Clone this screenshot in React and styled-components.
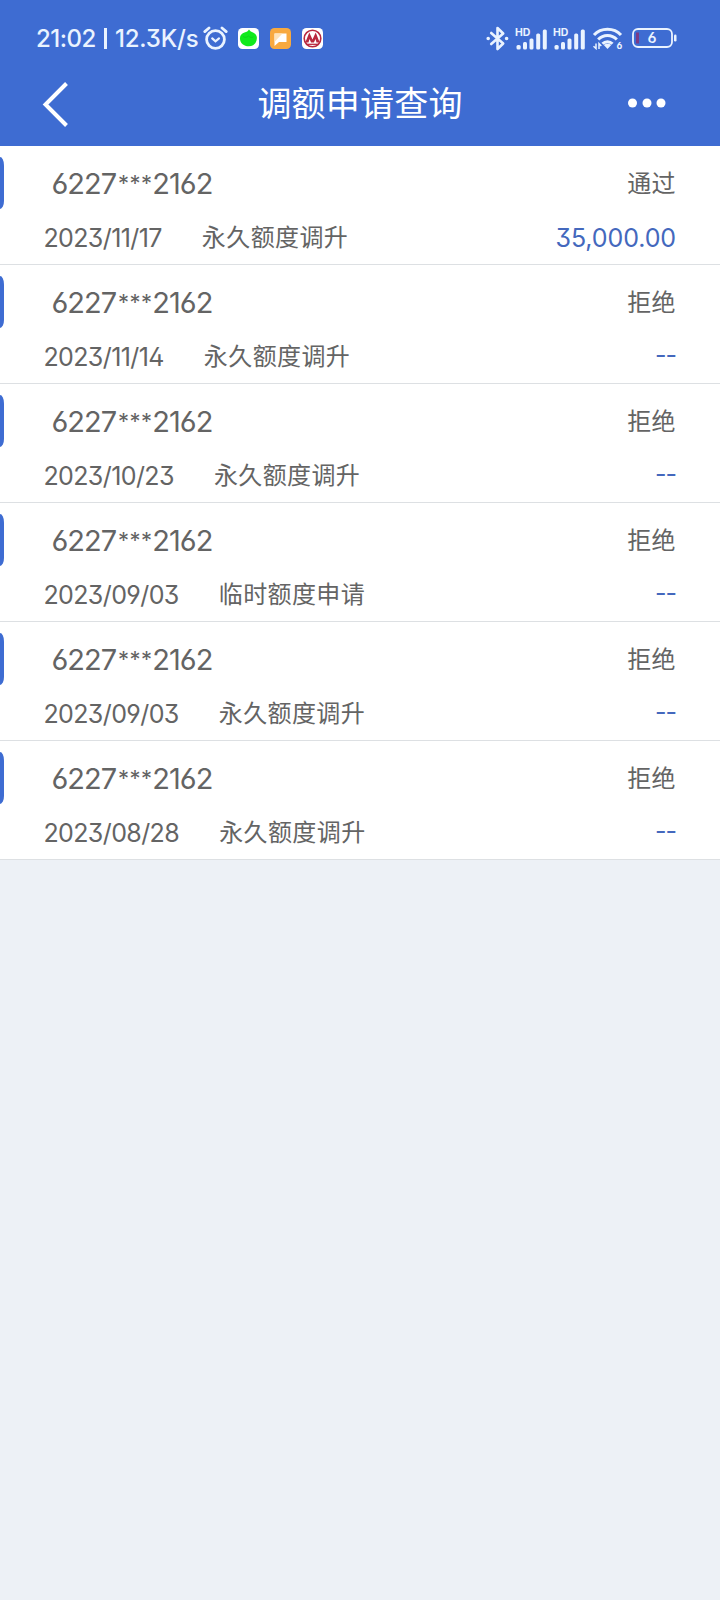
import React from 'react';
import styled, { createGlobalStyle } from 'styled-components';

const GlobalStyle = createGlobalStyle`
  * {
    box-sizing: border-box;
  }

  body {
    margin: 0;
    background: #edf1f6;
    font-family: Inter, 'Noto Sans CJK SC', sans-serif;
    font-feature-settings: 'ss01';
  }
`;

const Page = styled.div`
  width: 720px;
  min-height: 1600px;
  background: #edf1f6;
`;

const Header = styled.header`
  height: 146px;
  background: #3e6cd2;
  color: #fff;
`;

const StatusBar = styled.div`
  display: flex;
  align-items: center;
  justify-content: space-between;
  height: 76px;
  padding: 0 43px 0 36px;
  color: #eaf3ff;
`;

const StatusGroup = styled.div`
  display: flex;
  align-items: center;

  svg {
    display: block;
    flex: none;
  }
`;

const StatusText = styled.span`
  width: ${p => p.$width}px;
  padding-top: 2px;
  font-size: 24px;
  font-weight: 500;
  line-height: 30px;
  letter-spacing: ${p => p.$spacing}px;
  white-space: nowrap;
`;

const Divider = styled.span`
  width: 3px;
  height: 21px;
  margin-right: 8px;
  background: #eaf3ff;
`;

const AppIcons = styled.div`
  display: flex;
  gap: 11px;
  margin-left: 10px;
`;

const Signals = styled.div`
  display: flex;
  gap: 6px;
  margin: 0 7px 0 6px;
`;

const NavBar = styled.div`
  display: grid;
  grid-template-columns: 120px 1fr 120px;
  align-items: center;
  height: 56px;
`;

const NavButton = styled.button`
  display: flex;
  justify-content: ${p => (p.$end ? 'flex-end' : 'flex-start')};
  padding: ${p => (p.$end ? '0 54px 2px 0' : '0 0 1px 41px')};
  border: none;
  background: none;
  color: #fff;
`;

const Title = styled.h1`
  margin: 0;
  font-size: 34px;
  font-weight: 400;
  line-height: 48px;
  letter-spacing: 0.2px;
  text-align: center;
`;

const Row = styled.div`
  display: flex;
  align-items: flex-start;
  height: 119px;
  background: #fff;
  border-bottom: 1px solid #dde0e3;
`;

const CardEdge = styled.div`
  width: 4.4px;
  height: 52px;
  margin-top: 11px;
  border-radius: 0 4.4px 4.4px 0 / 0 9px 9px 0;
  background: #3e6cd2;
`;

const RowBody = styled.div`
  flex: 1;
  padding: 0 44px 0 39px;
  color: #646464;
`;

const Line = styled.div`
  display: flex;
  align-items: center;
  justify-content: space-between;
  height: ${p => p.$height}px;
  font-size: 24px;
`;

const CardNumber = styled.span`
  padding-left: 8px;
  font-size: 29px;
  letter-spacing: -1px;
`;

const Mask = styled.span`
  margin: 0 0 0 2px;
  font-size: 22px;
  line-height: 1;
  letter-spacing: 0.4px;
  vertical-align: 3px;
`;

const Status = styled.span`
  padding-bottom: 5px;
  letter-spacing: 0.4px;
`;

const Detail = styled.div`
  display: flex;
  align-items: center;
`;

const DateText = styled.span`
  margin-right: 40px;
  font-size: 25px;
  letter-spacing: -0.6px;
`;

const Kind = styled.span`
  padding-bottom: 5px;
  letter-spacing: 0.4px;
`;

const Amount = styled.span`
  padding-bottom: ${p => (p.$empty ? 3 : 0)}px;
  color: #4468bd;
  font-size: 25px;
  letter-spacing: ${p => (p.$empty ? -1 : -0.1)}px;
`;

const records = [
  { date: '2023/11/17', kind: '永久额度调升', status: '通过', amount: '35,000.00' },
  { date: '2023/11/14', kind: '永久额度调升', status: '拒绝', amount: '--' },
  { date: '2023/10/23', kind: '永久额度调升', status: '拒绝', amount: '--' },
  { date: '2023/09/03', kind: '临时额度申请', status: '拒绝', amount: '--' },
  { date: '2023/09/03', kind: '永久额度调升', status: '拒绝', amount: '--' },
  { date: '2023/08/28', kind: '永久额度调升', status: '拒绝', amount: '--' },
];

const AlarmIcon = () => (
  <svg width="25" height="24" viewBox="0 0 25 24" fill="none" stroke="currentColor" strokeLinecap="round">
    <circle cx="12.5" cy="13.5" r="8.9" strokeWidth="2.8" />
    <path d="M1.8 5.6 6 2M23.2 5.6 19 2" strokeWidth="2.8" />
    <path d="m9.2 12.4 3.3 2.9 3.5-2.9" strokeWidth="2.2" />
  </svg>
);

const LeafIcon = () => (
  <svg width="21" height="21" viewBox="0 0 21 21">
    <rect width="21" height="21" rx="4.5" fill="#fff" />
    <path d="M11 1.500c1 1.800 2.300 2.200 4.500 3.200 2.700 1.600 3.700 3.700 3.300 6-.2 4.600-3.600 7.600-8 7.600-5 0-8.500-3-8.800-7.300C1.600 7.500 4 5.500 6.500 4.600 8.800 3.800 10 3.200 11 1.500z" fill="#10ea1c" />
    <path d="M5 8.500c2 1.200 3.800 1 5.500-.5 1.500 1.600 3.500 1.800 5 .8" fill="none" stroke="#08c914" strokeWidth="0.6" />
  </svg>
);

const NoteIcon = () => (
  <svg width="21" height="21" viewBox="0 0 21 21">
    <rect width="21" height="21" rx="4.5" fill="#f8a93f" />
    <path d="M4.500 5.500h12v8.500H9L4.500 18z" fill="#fff" />
    <path d="m4.500 14 8-8.500h-8z" fill="#ffe3b8" />
  </svg>
);

const BankIcon = () => (
  <svg width="21" height="21" viewBox="0 0 21 21">
    <rect width="21" height="21" rx="4.5" fill="#fff" />
    <circle cx="10.5" cy="10.5" r="8.3" fill="none" stroke="#b9283f" strokeWidth="1.6" />
    <path d="M3.300 14.500 7.300 4.500l3.200 7 3.200-7 4 10h-3.200l-1-3.500-1.600 3.500H9.100L7.500 11l-1 3.500z" fill="#b9283f" />
    <path d="M4.500 16.300h12" stroke="#b9283f" strokeWidth="1.3" />
  </svg>
);

const BluetoothIcon = () => (
  <svg width="23" height="25" viewBox="0 0 23 25" fill="none" stroke="currentColor" strokeWidth="2.6" strokeLinejoin="round" strokeLinecap="round">
    <path d="m5.200 7 12 10.500-5.700 5.500V2l5.700 5.500L5.200 18" />
    <circle cx="2.200" cy="12.500" r="1" fill="currentColor" strokeWidth="1.600" />
    <circle cx="20.600" cy="12.500" r="1" fill="currentColor" strokeWidth="1.600" />
  </svg>
);

const SignalIcon = () => (
  <svg width="32" height="24" viewBox="0 -2 32 24" fill="currentColor">
    <text x="0" y="7.8" fontSize="10.5" fontWeight="700" fontFamily="Inter, sans-serif">HD</text>
    <rect x="1.500" y="17" width="4.200" height="4.500" rx="1.500" />
    <rect x="8" y="14" width="4" height="7.500" rx="1.500" />
    <rect x="14.500" y="10.500" width="4" height="11" rx="1.500" />
    <rect x="21.200" y="5.500" width="4" height="16" rx="1.500" />
    <rect x="27.800" y="1.500" width="4" height="20" rx="1.500" />
  </svg>
);

const WifiIcon = () => (
  <svg width="31" height="23" viewBox="0 0 31 23" fill="none" stroke="currentColor" strokeWidth="3">
    <path d="M2 8C9 .3 22 .3 29 8" />
    <path d="M6.200 12.600c5-5.400 13.600-5.400 18.600 0" />
    <path d="M10.500 16.800c2.800-2.800 7.200-2.800 10 0" />
    <path d="m11.800 18 3.700 4 3.700-4c-2-1.800-5.400-1.800-7.400 0z" fill="currentColor" stroke="none" />
    <path d="M4 16.500v5L1.500 19.200M7 22v-5.500l2.300 2.400" strokeWidth="1.500" />
    <text x="24.500" y="22.300" fontSize="9.500" fontWeight="700" fill="currentColor" stroke="none" fontFamily="Inter, sans-serif">6</text>
  </svg>
);

const BatteryIcon = () => (
  <svg width="45" height="20" viewBox="0 0 45 20">
    <rect x="1" y="1" width="39" height="18" rx="5" fill="none" stroke="currentColor" strokeWidth="1.8" />
    <path d="M4 4.500h3v11H4z" fill="#7b3a86" />
    <rect x="42" y="6.500" width="2.500" height="7" rx="1.200" fill="currentColor" />
    <text x="20" y="15.300" fontSize="15" fontWeight="600" textAnchor="middle" fill="currentColor" fontFamily="Inter, sans-serif">6</text>
  </svg>
);

const BackIcon = () => (
  <svg width="27" height="46" viewBox="0 0 27 46" fill="none" stroke="currentColor" strokeWidth="4">
    <path d="M25.500 2.500 4.500 23.500l21 21" />
  </svg>
);

const MoreIcon = () => (
  <svg width="38" height="10" viewBox="0 0 38 10" fill="currentColor">
    <circle cx="4.500" cy="5" r="4.500" />
    <circle cx="19" cy="5" r="4.500" />
    <circle cx="33" cy="5" r="4.500" />
  </svg>
);

const App = () => (
  <Page>
    <GlobalStyle />
    <Header>
      <StatusBar>
        <StatusGroup>
          <StatusText $width={68} $spacing={-0.5}>21:02</StatusText>
          <Divider />
          <StatusText $width={88} $spacing={-0.2}>12.3K/s</StatusText>
          <AlarmIcon />
          <AppIcons>
            <LeafIcon />
            <NoteIcon />
            <BankIcon />
          </AppIcons>
        </StatusGroup>
        <StatusGroup>
          <BluetoothIcon />
          <Signals>
            <SignalIcon />
            <SignalIcon />
          </Signals>
          <WifiIcon />
          <StatusText $width={9} />
          <BatteryIcon />
        </StatusGroup>
      </StatusBar>
      <NavBar>
        <NavButton aria-label="返回"><BackIcon /></NavButton>
        <Title>调额申请查询</Title>
        <NavButton $end aria-label="更多"><MoreIcon /></NavButton>
      </NavBar>
    </Header>
    {records.map((r, i) => (
      <Row key={i}>
        <CardEdge />
        <RowBody>
          <Line $height={75}>
            <CardNumber>6227<Mask>***</Mask>2162</CardNumber>
            <Status>{r.status}</Status>
          </Line>
          <Line $height={33}>
            <Detail>
              <DateText>{r.date}</DateText>
              <Kind>{r.kind}</Kind>
            </Detail>
            <Amount $empty={r.amount === '--'}>{r.amount}</Amount>
          </Line>
        </RowBody>
      </Row>
    ))}
  </Page>
);

export default App;
